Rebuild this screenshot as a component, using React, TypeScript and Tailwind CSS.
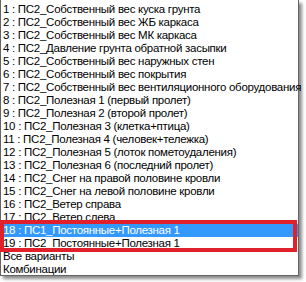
import React from 'react';

const items = [
  '1 : ПС2_Собственный вес куска грунта',
  '2 : ПС2_Собственный вес ЖБ каркаса',
  '3 : ПС2_Собственный вес МК каркаса',
  '4 : ПС2_Давление грунта обратной засыпки',
  '5 : ПС2_Собственный вес наружных стен',
  '6 : ПС2_Собственный вес покрытия',
  '7 : ПС2_Собственный вес вентиляционного оборудования',
  '8 : ПС2_Полезная 1 (первый пролет)',
  '9 : ПС2_Полезная 2 (второй пролет)',
  '10 : ПС2_Полезная 3 (клетка+птица)',
  '11 : ПС2_Полезная 4 (человек+тележка)',
  '12 : ПС2_Полезная 5 (лоток пометоудаления)',
  '13 : ПС2_Полезная 6 (последний пролет)',
  '14 : ПС2_Снег на правой половине кровли',
  '15 : ПС2_Снег на левой половине кровли',
  '16 : ПС2_Ветер справа',
  '17 : ПС2_Ветер слева',
  '18 : ПС1_Постоянные+Полезная 1',
  '19 : ПС2_Постоянные+Полезная 1',
  'Все варианты',
  'Комбинации',
];

export default function App() {
  return (
    <div className="w-[306px] h-[282px] bg-white overflow-hidden">
      <div className="relative w-[299px] h-[276px] bg-white border-l border-r border-b border-[#646464] shadow-[3px_3px_3px_rgba(0,0,0,0.45)] pt-[3px] text-[11.5px] tracking-[-0.28px] text-black font-['Liberation_Sans','Arial',sans-serif]">
        {items.map((t, i) => (
          <div
            key={i}
            className={
              'h-[13px] leading-[13px] pl-[2px] whitespace-nowrap ' +
              (i === 17 ? 'bg-[#3399ff] text-white' : '')
            }
          >
            {t}
          </div>
        ))}
        <div className="absolute left-[-1px] top-[220px] w-[297px] h-[32px] border-4 border-[#e0202a]"></div>
      </div>
    </div>
  );
}
